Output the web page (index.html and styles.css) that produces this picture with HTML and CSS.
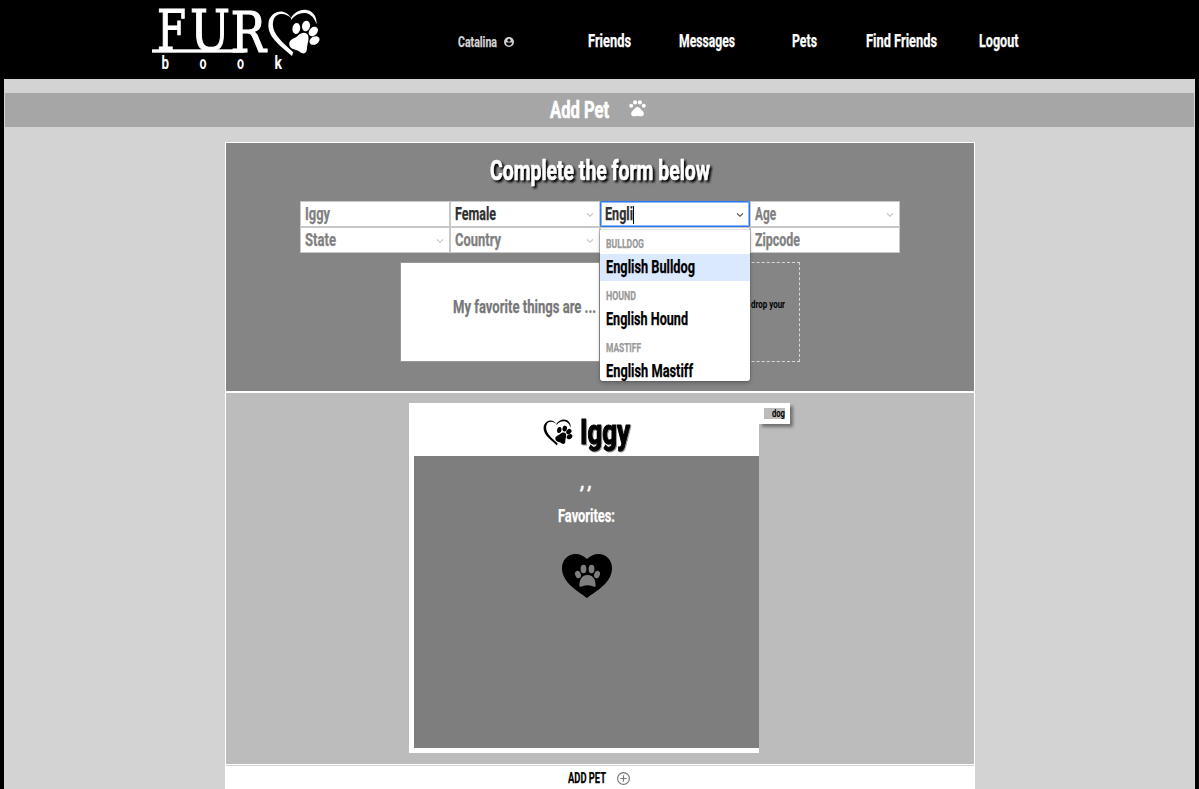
FILE: index.html
```html
<!DOCTYPE html>
<html lang="en">
<head>
<meta charset="utf-8">
<title>Furbook - Add Pet</title>
<link rel="stylesheet" href="styles.css">
</head>
<body>
<svg class="defs" width="0" height="0">
  <symbol id="heart-paw" viewBox="268 9 52 48">
    <path d="M291.500 18.500C286 9 274 9 269 20C265 36 280 45 292 56L293.500 51.500L296.500 50L293 52C281 41 270 32 273.500 20C276 12 286 12.500 291.500 18.500ZM291 18C297 8 310 7 315 16Q317 20 316.500 24Q313 14.500 306 13Q297 12 291 20Z"/>
    <path d="M301 33.500C304 32 308 33 308.500 37C309 41 307 44 307 48C307 53 304 55 300 52C296 49 291 50 289.500 45.500C288 40 293 39 295.500 37.500C298 36 298.500 34.500 301 33.500Z"/>
    <ellipse cx="296.300" cy="28.500" rx="3.900" ry="5.500" transform="rotate(8 296.300 28.500)"/>
    <ellipse cx="306" cy="26" rx="4" ry="5.300" transform="rotate(12 306 26)"/>
    <ellipse cx="313.300" cy="31.500" rx="4" ry="5.300" transform="rotate(45 313.300 31.500)"/>
    <ellipse cx="314.500" cy="40.500" rx="4" ry="5.300" transform="rotate(60 314.500 40.500)"/>
  </symbol>
  <symbol id="chevron" viewBox="0 0 8 6"><path d="M1 1.300L4 4.300L7 1.300" fill="none" stroke="currentColor" stroke-width="1.100"/></symbol>
</svg>
<header class="header">
  <svg class="logo" width="170" height="79" viewBox="152 0 170 79">
    <g class="logo-name"><text x="157" y="50" textLength="29" lengthAdjust="spacingAndGlyphs">F</text><text x="190" y="50" textLength="40" lengthAdjust="spacingAndGlyphs">U</text><text x="230.500" y="51.500" textLength="35.500" lengthAdjust="spacingAndGlyphs">R</text></g>
    <rect x="152" y="49.300" width="92.500" height="3.400"/>
    <g class="logo-sub"><text x="161.500" y="68.500" textLength="7.500" lengthAdjust="spacingAndGlyphs">b</text><text x="199.500" y="68.500" textLength="7" lengthAdjust="spacingAndGlyphs">o</text><text x="237" y="68.500" textLength="7" lengthAdjust="spacingAndGlyphs">o</text><text x="274.500" y="68.500" textLength="7.500" lengthAdjust="spacingAndGlyphs">k</text></g>
    <use href="#heart-paw" x="268" y="9" width="52" height="48"/>
  </svg>
  <nav class="nav">
    <a class="user"><svg class="txt s15" width="39" height="20"><text y="15" textLength="39" lengthAdjust="spacingAndGlyphs">Catalina</text></svg><svg width="10" height="10" viewBox="0 0 10 10"><circle cx="5" cy="5" r="5"/><circle cx="5" cy="3.200" r="1.500" class="hole"/><path class="hole" d="M1.700 5.400H8.300Q7.500 8.500 5 8.500T1.700 5.400Z"/></svg></a>
    <a class="n1"><svg class="txt s18" width="43" height="20"><text y="15" textLength="43" lengthAdjust="spacingAndGlyphs">Friends</text></svg></a>
    <a class="n2"><svg class="txt s18" width="56" height="20"><text y="15" textLength="56" lengthAdjust="spacingAndGlyphs">Messages</text></svg></a>
    <a class="n3"><svg class="txt s18" width="25" height="20"><text y="15" textLength="25" lengthAdjust="spacingAndGlyphs">Pets</text></svg></a>
    <a class="n4"><svg class="txt s18" width="71" height="20"><text y="15" textLength="71" lengthAdjust="spacingAndGlyphs">Find Friends</text></svg></a>
    <a class="n5"><svg class="txt s18" width="40" height="20"><text y="15" textLength="39.500" lengthAdjust="spacingAndGlyphs">Logout</text></svg></a>
  </nav>
</header>
<div class="title-bar">
  <svg class="txt s24" width="59" height="34"><text y="25" textLength="59" lengthAdjust="spacingAndGlyphs">Add Pet</text></svg>
  <svg class="paw" width="17" height="17" viewBox="0 0 17 17"><circle cx="2.200" cy="5.700" r="2"/><circle cx="6.100" cy="2.400" r="2.100"/><circle cx="10.900" cy="2.400" r="2.100"/><circle cx="14.800" cy="5.700" r="2"/><path d="M6 8.300Q8.500 5.500 11 8.300L14 11.500C16 14 14.500 16.700 11.500 16.300Q8.500 15.700 5.500 16.300C2.500 16.700 1 14 3 11.500Z"/></svg>
</div>
<main class="panel">
  <section class="form">
    <svg class="txt s27 heading" width="220" height="30"><text y="24" textLength="220" lengthAdjust="spacingAndGlyphs">Complete the form below</text></svg>
    <div class="fields">
      <div class="field"><svg class="txt s18" width="25" height="24"><text y="18" textLength="25" lengthAdjust="spacingAndGlyphs">Iggy</text></svg></div>
      <div class="field filled"><svg class="txt s18" width="41" height="24"><text y="18" textLength="41" lengthAdjust="spacingAndGlyphs">Female</text></svg><svg class="chev" width="8" height="6"><use href="#chevron"/></svg></div>
      <div class="field filled active"><svg class="txt s18" width="28" height="24"><text y="18" textLength="28" lengthAdjust="spacingAndGlyphs">Engli</text></svg><i class="caret"></i><svg class="chev" width="8" height="6"><use href="#chevron"/></svg>
        <div class="menu">
          <div class="group"><svg class="txt s13" width="38" height="24"><text y="18" textLength="38" lengthAdjust="spacingAndGlyphs">BULLDOG</text></svg></div>
          <div class="option selected"><svg class="txt s18" width="89" height="27"><text y="19" textLength="89" lengthAdjust="spacingAndGlyphs">English Bulldog</text></svg></div>
          <div class="group"><svg class="txt s13" width="30" height="25"><text y="19" textLength="30" lengthAdjust="spacingAndGlyphs">HOUND</text></svg></div>
          <div class="option"><svg class="txt s18" width="82" height="27"><text y="19" textLength="82" lengthAdjust="spacingAndGlyphs">English Hound</text></svg></div>
          <div class="group"><svg class="txt s13" width="35" height="25"><text y="19" textLength="35" lengthAdjust="spacingAndGlyphs">MASTIFF</text></svg></div>
          <div class="option"><svg class="txt s18" width="87" height="27"><text y="19" textLength="87" lengthAdjust="spacingAndGlyphs">English Mastiff</text></svg></div>
        </div>
      </div>
      <div class="field"><svg class="txt s18" width="21" height="24"><text y="18" textLength="21" lengthAdjust="spacingAndGlyphs">Age</text></svg><svg class="chev" width="8" height="6"><use href="#chevron"/></svg></div>
      <div class="field"><svg class="txt s18" width="31" height="24"><text y="18" textLength="31" lengthAdjust="spacingAndGlyphs">State</text></svg><svg class="chev" width="8" height="6"><use href="#chevron"/></svg></div>
      <div class="field"><svg class="txt s18" width="46" height="24"><text y="18" textLength="46" lengthAdjust="spacingAndGlyphs">Country</text></svg><svg class="chev" width="8" height="6"><use href="#chevron"/></svg></div>
      <div class="field"></div>
      <div class="field"><svg class="txt s18" width="45" height="24"><text y="18" textLength="45" lengthAdjust="spacingAndGlyphs">Zipcode</text></svg></div>
    </div>
    <div class="extras">
      <div class="favorites"><svg class="txt s18" width="143" height="24"><text y="18" textLength="143" lengthAdjust="spacingAndGlyphs">My favorite things are ...</text></svg></div>
      <div class="dropzone"><svg class="txt s10" width="34" height="14"><text y="10" textLength="34" lengthAdjust="spacingAndGlyphs">drop your</text></svg></div>
    </div>
  </section>
  <section class="preview">
    <article class="card">
      <div class="card-head">
        <svg class="mark" width="30" height="27"><use href="#heart-paw"/></svg>
        <svg class="txt s36 name" width="50" height="48"><text y="35" textLength="50" lengthAdjust="spacingAndGlyphs">Iggy</text></svg>
      </div>
      <div class="card-body">
        <svg class="txt s18 commas" width="11" height="20"><text y="11" textLength="11" lengthAdjust="spacingAndGlyphs">, ,</text></svg>
        <svg class="txt s18 fav" width="57" height="20"><text y="16" textLength="57" lengthAdjust="spacingAndGlyphs">Favorites:</text></svg>
        <svg class="like" width="50" height="44" viewBox="0 0 50 44"><path d="M25 44C16 37 0 29 0 14C0 6 6 0 13.500 0C18 0 22 2 25 5C28 2 32 0 36.500 0C44 0 50 6 50 14C50 29 34 37 25 44Z"/><g class="pad"><ellipse cx="16" cy="20.500" rx="2.800" ry="3.800" transform="rotate(-20 16 20.500)"/><ellipse cx="21.500" cy="15" rx="2.900" ry="4.300"/><ellipse cx="29.500" cy="15" rx="2.900" ry="4.300"/><ellipse cx="35" cy="20.500" rx="2.800" ry="3.800" transform="rotate(20 35 20.500)"/><path d="M17.500 32.500C17 27 19 21 25.500 21S34 27 33.500 32.500Q32 33 30 32Q25.500 30.500 21 32Q19 33 17.500 32.500Z"/></g></svg>
      </div>
      <div class="tag"><span class="tag-label"><svg class="txt s10" width="13" height="11"><text y="8.500" textLength="13" lengthAdjust="spacingAndGlyphs">dog</text></svg></span></div>
    </article>
  </section>
  <div class="submit">
    <svg class="txt s14" width="38" height="22"><text y="17" textLength="38" lengthAdjust="spacingAndGlyphs">ADD PET</text></svg>
    <svg class="plus" width="13" height="13" viewBox="0 0 13 13"><circle cx="6.500" cy="6.500" r="5.900"/><path d="M6.500 3.300V9.700M3.300 6.500H9.700"/></svg>
  </div>
</main>
</body>
</html>
```
FILE: styles.css
```css
* { box-sizing: border-box; }
body {
  margin: 0;
  height: 789px;
  overflow: hidden;
  background: #d3d3d3;
  border: solid #000;
  border-width: 0 4px;
  font-family: Roboto, "Liberation Sans", sans-serif;
}
svg { display: block; flex: none; }
.defs { position: absolute; }
.txt { overflow: visible; fill: currentColor; stroke: currentColor; stroke-width: 0.25px; font-weight: 700; }
.s10 { font-size: 10px; stroke-width: 0; }
.s13 { font-size: 13.5px; }
.s14 { font-size: 14.5px; }
.s15 { font-size: 14.5px; }
.s18 { font-size: 17.5px; }
.s24 { font-size: 24px; stroke-width: 0.6px; }
.s27 { font-size: 27px; stroke-width: 0.7px; }
.s36 { font-size: 35px; stroke-width: 1.2px; }

.header { display: flex; height: 79px; padding-left: 148px; background: #000; color: #fff; }
.logo { fill: #fff; overflow: visible; }
.logo-name { font: 56px "DejaVu Serif", serif; stroke: #fff; stroke-width: 1.1px; }
.logo-sub { font-size: 18.5px; font-weight: 700; }
.nav { display: flex; padding: 32px 0 0 136px; }
.user { display: flex; gap: 7px; color: #d3d3d3; fill: #d3d3d3; width: 57px; }
.user svg:last-child { margin-top: 5px; }
.hole { fill: #000; }
.n1 { margin-left: 72.5px; }
.n2 { margin-left: 48px; }
.n3 { margin-left: 57px; }
.n4 { margin-left: 49.5px; }
.n5 { margin-left: 42px; }

.title-bar { display: flex; justify-content: center; gap: 20px; height: 34px; margin: 14px 1px 0; padding-right: 3px; background: #a6a6a6; color: #fff; }
.paw { fill: #fff; margin-top: 7px; }

.panel { width: 750px; height: 647px; margin: 15px auto 0 221px; border: 1px solid #fff; border-bottom: 0; background: #bcbcbc; }
.form { height: 250px; padding-top: 13px; background: #858585; border-bottom: 2px solid #fff; }
.heading { margin: 0 0 15px 264px; color: #fff; filter: drop-shadow(2px 2px 1px #000); }
.fields { display: grid; grid-template-columns: repeat(4, 150px); grid-auto-rows: 26px; margin-left: 74px; }
.field { position: relative; display: flex; padding-left: 4px; background: #fff; border: 1px solid #c8c8c8; color: #808080; }
.filled { color: #303030; }
.chev { margin: 10px 5px 0 auto; color: #c0c0c0; }
.active { border: 1px solid #2878f8; border-radius: 2px; box-shadow: inset 0 0 0 1px #2878f888; }
.active .chev { color: #444; }
.caret { width: 1px; height: 18px; margin-top: 4px; background: #000; }
.menu { position: absolute; z-index: 2; top: 28px; left: -1px; width: 150px; height: 151px; background: #fff; border-radius: 0 0 3px 3px; box-shadow: 0 0 0 1px #0001, 0 2px 4px #0004; overflow: hidden; }
.group, .option { padding-left: 5.5px; }
.group { color: #999; }
.option { color: #000; }
.selected { background: #dbe9ff; }
.extras { display: flex; margin: 9px 0 0 174px; }
.favorites { width: 200px; height: 100px; padding: 32px 0 0 52px; background: #fff; border: 1px solid #999; color: #777; }
.dropzone { width: 200px; height: 100px; padding: 35px 0 0 150px; border: 1px dashed #d9d9d9; color: #000; }

.preview { height: 371px; padding: 10px 0 0 183px; }
.card { position: relative; width: 350px; height: 350px; background: #fff; padding: 0 0 5px 5px; }
.card-head { display: flex; height: 53px; padding: 6px 0 0 129px; }
.mark { margin: 10px 7px 0 0; }
.name { color: #000; filter: drop-shadow(1px 1px 0.5px #0006); }
.card-body { height: 292px; padding-top: 21px; background: #7e7e7e; color: #fff; }
.commas { margin-left: 167px; font-style: italic; stroke-width: 0.6px; }
.fav { margin: 9px 0 0 144px; }
.like { margin: 28px 0 0 148px; fill: #000; }
.pad { fill: #7e7e7e; }
.tag { position: absolute; left: 350px; top: 0; width: 31px; height: 21px; padding: 5px; background: #fff; box-shadow: 3px 3px 3px #0006; clip-path: inset(0 -8px -8px 0); }
.tag-label { display: block; height: 11px; padding-left: 8px; background: #bcbcbc; color: #000; }

.submit { display: flex; height: 26px; border-top: 1px solid #fff; padding-left: 342px; background: #fff; box-shadow: inset 0 1px #d3d3d3; color: #000; }
.submit .txt { margin-top: 1px; }
.plus { margin: 7px 0 0 11px; fill: none; stroke: #777; stroke-width: 1.2; }
```
